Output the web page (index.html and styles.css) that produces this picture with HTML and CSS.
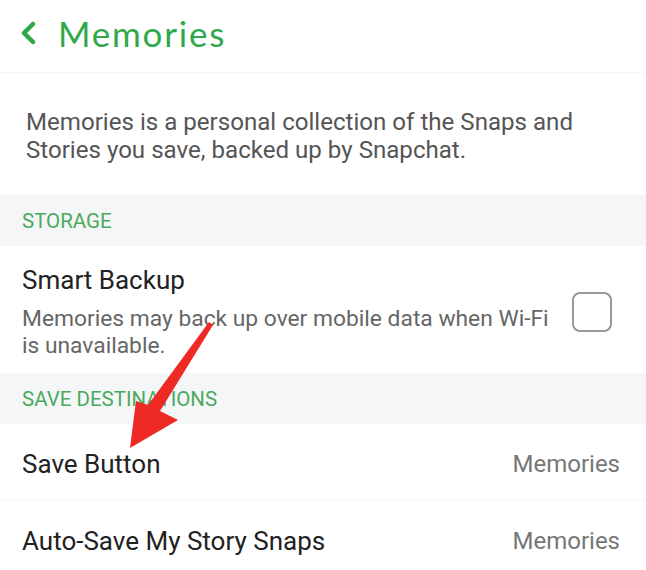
FILE: index.html
```html
<!DOCTYPE html>
<html>
<head>
<meta charset="utf-8">
<link rel="stylesheet" href="styles.css">
</head>
<body>
<div class="page">
  <header class="topbar">
    <svg class="back" width="18" height="24" viewBox="0 0 18 24"><path d="M13 3 L4 12 L13 21" fill="none" stroke="#2fa84a" stroke-width="4.5" stroke-linecap="round" stroke-linejoin="round"/></svg>
    <h1 class="title">Memories</h1>
  </header>
  <p class="intro">Memories is a personal collection of the Snaps and Stories you save, backed up by Snapchat.</p>
  <div class="section">STORAGE</div>
  <div class="row backup">
    <div class="backup-text">
      <div class="row-title">Smart Backup</div>
      <div class="row-desc">Memories may back up over mobile data when Wi&#8209;Fi is unavailable.</div>
    </div>
    <div class="checkbox"></div>
  </div>
  <div class="section">SAVE DESTINATIONS</div>
  <div class="row item">
    <span class="row-title">Save Button</span>
    <span class="value">Memories</span>
  </div>
  <div class="row item">
    <span class="row-title">Auto-Save My Story Snaps</span>
    <span class="value">Memories</span>
  </div>
  <svg class="arrow" width="646" height="570" viewBox="0 0 646 570"><polygon points="209,322 148,405 136,401 130,448 178,420 160,411 213,325" fill="#ee2a24"/></svg>
</div>
</body>
</html>
```
FILE: styles.css
```css
html, body { margin: 0; padding: 0; background: #fff; }
.page { position: relative; width: 646px; height: 570px; overflow: hidden; font-family: Roboto, "Liberation Sans", sans-serif; }
.topbar { height: 73px; display: flex; align-items: center; padding-left: 20px; border-bottom: 1px solid #f6f7f6; box-sizing: border-box; }
.back { margin-right: 20px; margin-top: -6px; }
.title { margin: 0; font-family: Lato, "Noto Sans", sans-serif; font-weight: 400; font-size: 35px; color: #2fa84a; margin-top: -6px; letter-spacing: 1.8px; }
.intro { margin: 0; padding: 35px 26px 0 26px; height: 122px; box-sizing: border-box; font-size: 24.1px; line-height: 28px; color: #555; }
.section { height: 51px; background: #f5f6f7; display: flex; align-items: center; padding-left: 22px; font-size: 20.5px; color: #4aaa5c; }
.row { display: flex; align-items: center; padding: 0 26px 0 22px; }
.backup { height: 127px; box-sizing: border-box; padding-top: 4px; }
.backup-text { flex: 1; }
.row-title { font-size: 26px; color: #222; }
.backup .row-title { margin-bottom: 10px; }
.row-desc { font-size: 22.8px; line-height: 27px; color: #666; padding-right: 8px; }
.checkbox { width: 36px; height: 36px; border: 2px solid #9a9a9a; border-radius: 8px; margin-right: 8px; margin-top: 0; flex: none; }
.item { height: 77px; box-sizing: border-box; padding-top: 3px; justify-content: space-between; border-bottom: 1px solid #f6f6f6; }
.value { font-size: 24px; color: #777; }
.arrow { position: absolute; left: 0; top: 0; }
```
